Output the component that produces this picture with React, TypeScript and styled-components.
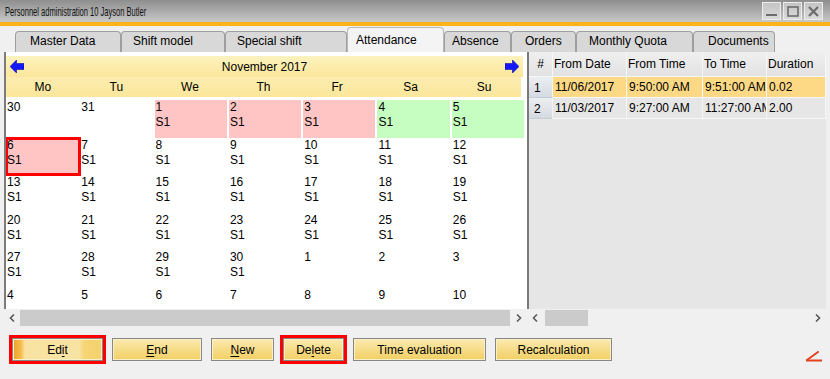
import React from "react";
import styled, { createGlobalStyle, css } from "styled-components";

const GlobalStyle = createGlobalStyle`
  html, body {
    margin: 0;
    padding: 0;
    background: #f0f0f0;
  }
  body {
    font-family: "Liberation Sans", Arial, sans-serif;
    font-size: 12px;
    color: #000;
  }
`;

type Day = { n: number; shift?: boolean; tone?: "pink" | "green"; selected?: boolean };

const weeks: Day[][] = [
  [
    { n: 30 },
    { n: 31 },
    { n: 1, shift: true, tone: "pink" },
    { n: 2, shift: true, tone: "pink" },
    { n: 3, shift: true, tone: "pink" },
    { n: 4, shift: true, tone: "green" },
    { n: 5, shift: true, tone: "green" },
  ],
  [6, 7, 8, 9, 10, 11, 12].map((n) =>
    n === 6 ? { n, shift: true, tone: "pink" as const, selected: true } : { n, shift: true }
  ),
  [13, 14, 15, 16, 17, 18, 19].map((n) => ({ n, shift: true })),
  [20, 21, 22, 23, 24, 25, 26].map((n) => ({ n, shift: true })),
  [
    { n: 27, shift: true },
    { n: 28, shift: true },
    { n: 29, shift: true },
    { n: 30, shift: true },
    { n: 1 },
    { n: 2 },
    { n: 3 },
  ],
  [4, 5, 6, 7, 8, 9, 10].map((n) => ({ n })),
];

const dayNames = ["Mo", "Tu", "We", "Th", "Fr", "Sa", "Su"];

const tabs = [
  { label: "Master Data", w: 106, pad: 14 },
  { label: "Shift model", w: 104, pad: 11 },
  { label: "Special shift", w: 122, pad: 11 },
  { label: "Attendance", w: 97, pad: 8, active: true },
  { label: "Absence", w: 67, pad: 7 },
  { label: "Orders", w: 65, pad: 13 },
  { label: "Monthly Quota", w: 117, pad: 12 },
  { label: "Documents", w: 82, pad: 14 },
];

const rows = [
  { no: 1, fromDate: "11/06/2017", fromTime: "9:50:00 AM", toTime: "9:51:00 AM", dur: "0.02", hot: true },
  { no: 2, fromDate: "11/03/2017", fromTime: "9:27:00 AM", toTime: "11:27:00 AM", dur: "2.00" },
];

const Window = styled.div`
  width: 830px;
  height: 379px;
  overflow: hidden;
  background: #f0f0f0;
  display: flex;
  flex-direction: column;
`;

const TitleBar = styled.div`
  height: 22px;
  border-bottom: 4px solid #fdb515;
  background: linear-gradient(to bottom, #8e8e8e, #c8c8c8);
  display: flex;
  align-items: center;
  justify-content: space-between;
  padding: 0 7px 0 5px;
`;

const TitleText = styled.span`
  display: inline-block;
  font-size: 13px;
  color: #111;
  white-space: nowrap;
  transform: scaleX(0.58);
  transform-origin: left center;
`;

const WinButtons = styled.div`
  display: flex;
  gap: 2px;
`;

const WinButton = styled.div`
  width: 17px;
  height: 16px;
  border: 1px solid #ececec;
  background: linear-gradient(to bottom, #c4c4c4, #dadada);
  display: flex;
  align-items: center;
  justify-content: center;
`;

const TabStrip = styled.div`
  height: 26px;
  display: flex;
  align-items: flex-end;
  padding-left: 15px;
`;

const Tab = styled.div<{ $w: number; $pad: number; $active?: boolean }>`
  box-sizing: border-box;
  width: ${(p) => p.$w}px;
  padding-left: ${(p) => p.$pad}px;
  height: 21px;
  line-height: 19px;
  font-size: 12px;
  white-space: nowrap;
  background: #d8d8d8;
  border: 1px solid #9e9e9e;
  border-bottom: none;
  border-radius: 4px 4px 0 0;
  ${(p) =>
    p.$active &&
    css`
      height: 25px;
      line-height: 25px;
      background: #f4f4f4;
      border-color: #b8b8b8;
    `}
`;

const Content = styled.div`
  display: flex;
`;

const Panel = styled.div<{ $w: number; $ml?: number }>`
  width: ${(p) => p.$w}px;
  margin-left: ${(p) => p.$ml ?? 0}px;
  display: flex;
  flex-direction: column;
  gap: 1px;
`;

const CalendarBody = styled.div`
  height: 257px;
  overflow: hidden;
  background: #fff;
  border-left: 2px solid #7c7c7c;
  padding-top: 4px;
  box-sizing: border-box;
`;

const MonthBar = styled.div`
  height: 21px;
  margin-right: 4px;
  display: flex;
  align-items: center;
  justify-content: space-between;
  padding: 0 4px;
  background: linear-gradient(to bottom, #fdf3c0 0%, #fdeeb0 40%, #fbe79c 100%);
  font-size: 12px;
`;

const DayNames = styled.div`
  height: 20px;
  margin-right: 6px;
  display: grid;
  grid-template-columns: repeat(7, 1fr);
  align-items: center;
  background: linear-gradient(to bottom, #fcedaf, #fbe69b);
  margin-bottom: 3px;
`;

const DayName = styled.div`
  text-align: center;
`;

const Grid = styled.div`
  display: grid;
  grid-template-columns: repeat(7, 74.3px);
  grid-auto-rows: 37.5px;
`;

const toneBg = { pink: "#ffc4c4", green: "#c6fdc0" };

const Cell = styled.div<{ $tone?: "pink" | "green"; $selected?: boolean }>`
  margin-right: 2px;
  padding-left: 1px;
  line-height: 15px;
  background: ${(p) => (p.$tone ? toneBg[p.$tone] : "transparent")};
  ${(p) =>
    p.$selected &&
    css`
      margin-right: 0;
      outline: 3px solid #ff0000;
      outline-offset: -2px;
    `}
`;

const TableBody = styled.div`
  height: 257px;
  overflow: hidden;
  background: #e6e6e6;
  border-left: 2px solid #7a7a7a;
  box-sizing: border-box;
`;

const TableRow = styled.div<{ $h: number }>`
  display: grid;
  grid-template-columns: 24px 74px 76px 64px 59px;
  height: ${(p) => p.$h}px;
`;

const HeadCell = styled.div<{ $center?: boolean }>`
  background: linear-gradient(to bottom, #efefef, #e2e2e2);
  border-right: 1px solid #f7f7f7;
  border-bottom: 1px solid #f7f7f7;
  display: flex;
  align-items: center;
  justify-content: ${(p) => (p.$center ? "center" : "flex-start")};
  padding-left: ${(p) => (p.$center ? 0 : 1)}px;
  white-space: nowrap;
  overflow: hidden;
`;

const NumCell = styled.div`
  background: linear-gradient(to bottom, #eceef1, #d5dae1);
  border-bottom: 1px solid #c6ccd4;
  border-right: 1px solid #f4f4f4;
  display: flex;
  align-items: flex-end;
  padding: 0 0 2px 5px;
`;

const DataCell = styled.div<{ $hot?: boolean }>`
  min-width: 0;
  background: ${(p) => (p.$hot ? "#fdd985" : "#e6e6e6")};
  border-right: 1px solid #f6f6f6;
  border-bottom: 1px solid #f6f6f6;
  display: flex;
  align-items: center;
  padding-left: 2px;
  white-space: nowrap;
  overflow: hidden;
  text-overflow: clip;
`;

const ScrollBar = styled.div`
  height: 16px;
  display: flex;
  background: #f0f0f0;
`;

const ScrollArrow = styled.div<{ $w: number }>`
  width: ${(p) => p.$w}px;
  display: flex;
  align-items: center;
  justify-content: center;
`;

const Track = styled.div`
  flex: 1;
  display: flex;
  align-items: stretch;
`;

const Thumb = styled.div<{ $ml: number; $w: string }>`
  margin-left: ${(p) => p.$ml}px;
  width: ${(p) => p.$w};
  background: #cbcbcb;
`;

const Footer = styled.div`
  display: flex;
  align-items: flex-start;
  gap: 9px;
  padding: 12px 7px 0 12px;
`;

const Button = styled.div<{ $w: number; $focused?: boolean; $marked?: boolean }>`
  box-sizing: border-box;
  width: ${(p) => p.$w}px;
  height: 23px;
  display: flex;
  align-items: center;
  justify-content: center;
  font-size: 12px;
  white-space: nowrap;
  border: 1px solid #878787;
  box-shadow: inset 0 0 0 1px #fbf0c8;
  background: linear-gradient(to bottom, #fbeab0, #f2cf62);
  ${(p) =>
    p.$focused &&
    css`
      background: linear-gradient(
        to right,
        #ef9f2a 0px,
        #f5bd4c 8px,
        #f9e3a2 12px,
        #f9e3a2 74%,
        #f5d576 80%,
        #f4d26c 100%
      );
    `}
  ${(p) =>
    p.$marked &&
    css`
      outline: 3px solid #ff0000;
      outline-offset: 0px;
    `}
  u {
    text-decoration: underline;
    text-underline-offset: 2px;
  }
`;

const CornerMark = styled.div`
  margin-left: auto;
  margin-top: 13px;
  width: 18px;
  height: 11px;
`;

const BlueArrow = ({ dir }: { dir: "left" | "right" }) => (
  <svg width="14" height="13" viewBox="0 0 14 13">
    <polygon
      points="0,6.5 6.5,0 6.5,3.5 14,3.5 14,9.5 6.5,9.5 6.5,13"
      fill="#1418ff"
      stroke="#0a0aa8"
      strokeWidth="0.6"
      transform={dir === "right" ? "translate(14,0) scale(-1,1)" : undefined}
    />
  </svg>
);

const Chevron = ({ dir }: { dir: "left" | "right" }) => (
  <svg width="6" height="8" viewBox="0 0 6 8">
    <polyline
      points={dir === "left" ? "5,0.5 1.5,4 5,7.5" : "1,0.5 4.5,4 1,7.5"}
      fill="none"
      stroke="#5a5a5a"
      strokeWidth="1.6"
    />
  </svg>
);

const App = () => {
  return (
    <>
      <GlobalStyle />
      <Window>
        <TitleBar>
          <TitleText>Personnel administration 10 Jayson Butler</TitleText>
          <WinButtons>
            <WinButton>
              <svg width="11" height="11" viewBox="0 0 11 11">
                <rect x="0" y="8" width="11" height="2" fill="#6c6c6c" />
              </svg>
            </WinButton>
            <WinButton>
              <svg width="12" height="11" viewBox="0 0 12 11">
                <rect x="1" y="1" width="10" height="9" fill="none" stroke="#6c6c6c" strokeWidth="1.6" />
              </svg>
            </WinButton>
            <WinButton>
              <svg width="11" height="11" viewBox="0 0 11 11">
                <path d="M1 1 L10 10 M10 1 L1 10" stroke="#6c6c6c" strokeWidth="2.2" />
              </svg>
            </WinButton>
          </WinButtons>
        </TitleBar>

        <TabStrip>
          {tabs.map((t) => (
            <Tab key={t.label} $w={t.w} $pad={t.pad} $active={t.active}>
              {t.label}
            </Tab>
          ))}
        </TabStrip>

        <Content>
          <Panel $w={523} $ml={4}>
            <CalendarBody>
              <MonthBar>
                <BlueArrow dir="left" />
                <span>November 2017</span>
                <BlueArrow dir="right" />
              </MonthBar>
              <DayNames>
                {dayNames.map((d) => (
                  <DayName key={d}>{d}</DayName>
                ))}
              </DayNames>
              <Grid>
                {weeks.flat().map((d, i) => (
                  <Cell key={i} $tone={d.tone} $selected={d.selected}>
                    <div>{d.n}</div>
                    {d.shift && <div>S1</div>}
                  </Cell>
                ))}
              </Grid>
            </CalendarBody>
            <ScrollBar>
              <ScrollArrow $w={16}>
                <Chevron dir="left" />
              </ScrollArrow>
              <Track>
                <Thumb $ml={0} $w="100%" />
              </Track>
              <ScrollArrow $w={17}>
                <Chevron dir="right" />
              </ScrollArrow>
            </ScrollBar>
          </Panel>

          <Panel $w={299}>
            <TableBody>
              <TableRow $h={25}>
                <HeadCell $center>#</HeadCell>
                <HeadCell>From Date</HeadCell>
                <HeadCell>From Time</HeadCell>
                <HeadCell>To Time</HeadCell>
                <HeadCell>Duration</HeadCell>
              </TableRow>
              {rows.map((r) => (
                <TableRow key={r.no} $h={21}>
                  <NumCell>{r.no}</NumCell>
                  <DataCell $hot={r.hot}>{r.fromDate}</DataCell>
                  <DataCell $hot={r.hot}>{r.fromTime}</DataCell>
                  <DataCell $hot={r.hot}>{r.toTime}</DataCell>
                  <DataCell $hot={r.hot}>{r.dur}</DataCell>
                </TableRow>
              ))}
            </TableBody>
            <ScrollBar>
              <ScrollArrow $w={16}>
                <Chevron dir="left" />
              </ScrollArrow>
              <Track>
                <Thumb $ml={2} $w="43px" />
              </Track>
              <ScrollArrow $w={16}>
                <Chevron dir="right" />
              </ScrollArrow>
            </ScrollBar>
          </Panel>
        </Content>

        <Footer>
          <Button $w={91} $focused $marked>
            Ed<u>i</u>t
          </Button>
          <Button $w={90}>
            <u>E</u>nd
          </Button>
          <Button $w={63}>
            <u>N</u>ew
          </Button>
          <Button $w={61} $marked>
            De<u>l</u>ete
          </Button>
          <Button $w={133}>Time evaluation</Button>
          <Button $w={117}>Recalculation</Button>
          <CornerMark>
            <svg width="18" height="11" viewBox="0 0 18 11">
              <path d="M13 1 L2 9" stroke="#e8401c" strokeWidth="2" strokeLinecap="round" />
              <path d="M1 9.5 L17 9.5" stroke="#e8401c" strokeWidth="2" />
            </svg>
          </CornerMark>
        </Footer>
      </Window>
    </>
  );
};

export default App;
